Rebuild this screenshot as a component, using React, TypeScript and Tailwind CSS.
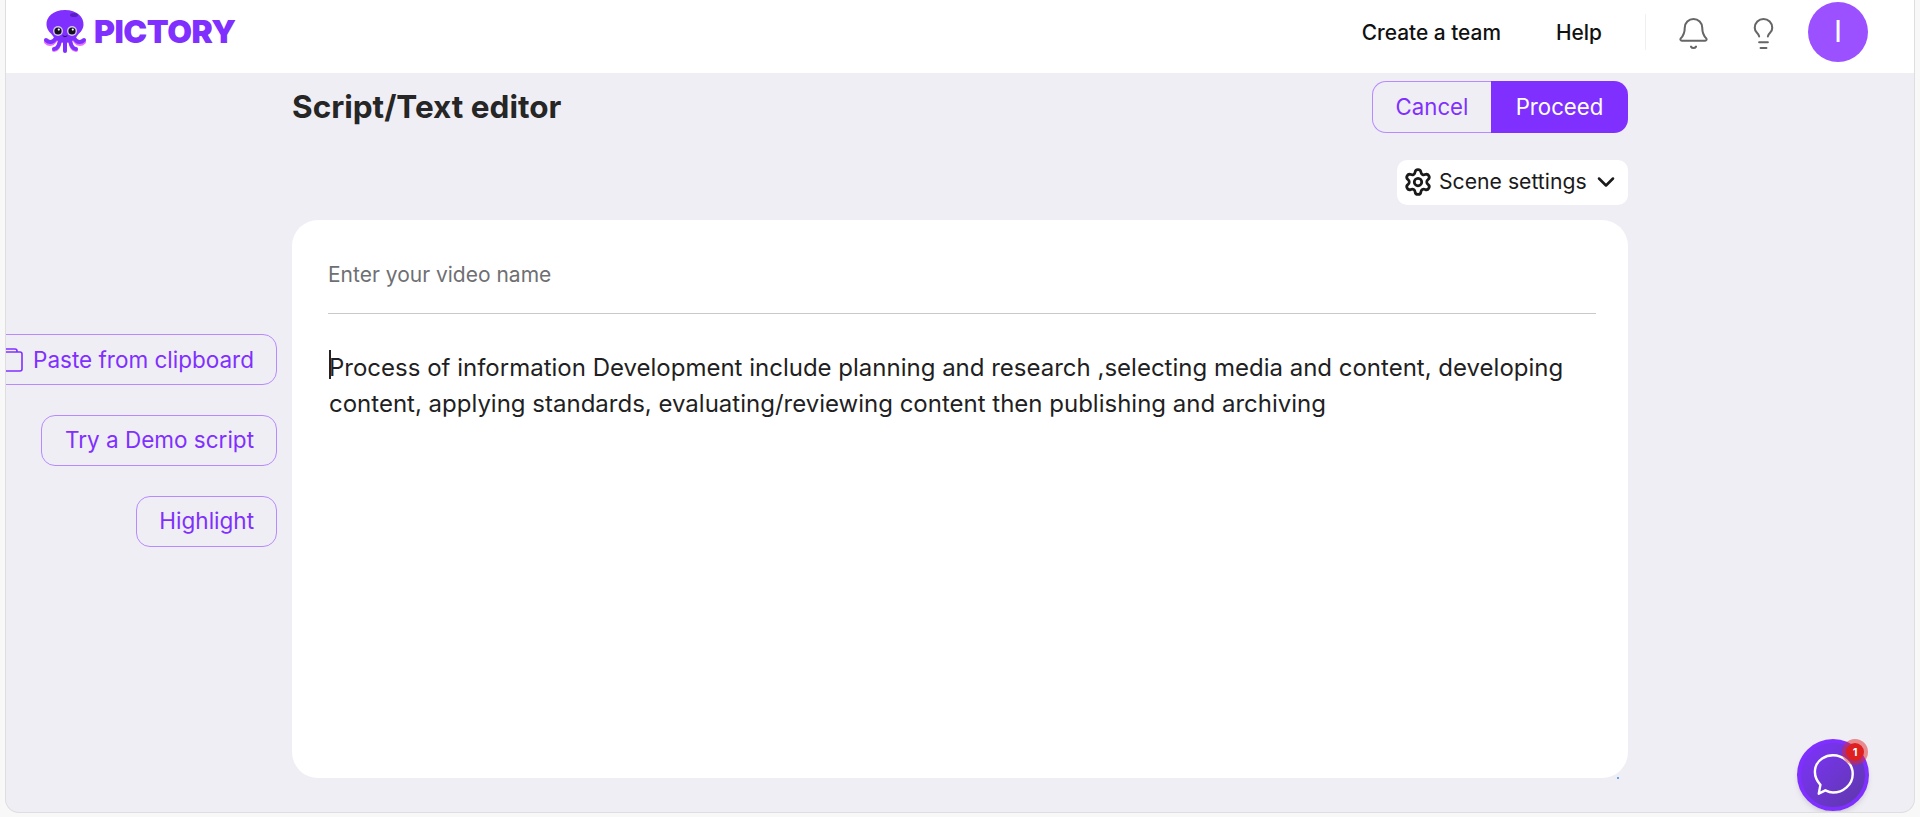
import { Bell, ChevronDown, Lightbulb, Settings } from "lucide-react"

function OctopusLogo() {
  return (
    <svg width="44" height="44" viewBox="0 0 44 44" className="shrink-0">
      <g fill="none" stroke="#e04dff" strokeWidth="4" strokeLinecap="round" opacity="0.8">
        <path d="M13 29 C10 35 6 35 3 32" />
        <path d="M31 29 C34 35 38 35 41 32" />
        <path d="M17 31 C16 37 14 40 11 40" />
        <path d="M27 31 C28 37 30 40 33 40" />
      </g>
      <g fill="none" stroke="#7f30ff" strokeWidth="4" strokeLinecap="round">
        <path d="M13 28 C10 33 6 33 3 30" />
        <path d="M31 28 C34 33 38 33 41 30" />
        <path d="M17 30 C16 36 14 39 11 39" />
        <path d="M27 30 C28 36 30 39 33 39" />
        <path d="M22 31 L22 41" />
      </g>
      <path d="M22 0 C34 0 41 7 40.500 15 C40 21 36 23 34 26 C32 30 27 33 22 33 C17 33 12 30 10 26 C8 23 4 21 3.500 15 C3 7 10 0 22 0 Z" fill="#7f30ff" />
      <ellipse cx="31" cy="5" rx="4" ry="2" fill="#5a1fc0" />
      <circle cx="15" cy="21" r="5" fill="#d5c4f7" />
      <circle cx="29" cy="21" r="5" fill="#d5c4f7" />
      <circle cx="15" cy="21" r="3.600" fill="#15101f" />
      <circle cx="29" cy="21" r="3.600" fill="#15101f" />
      <circle cx="15.800" cy="19.600" r="1.100" fill="#ffffff" />
      <circle cx="29.800" cy="19.600" r="1.100" fill="#ffffff" />
      <path d="M20 26 Q22 27.500 24 26" stroke="#2a1060" strokeWidth="1" fill="none" strokeLinecap="round" />
    </svg>
  )
}

function SideButton({ children, className }: { children: React.ReactNode; className?: string }) {
  return (
    <button className={"flex h-[51px] items-center justify-end rounded-[14px] border border-[#b88aff] pr-[22px] text-[22.500px] text-[#7f30ff] " + (className ?? "")}>
      {children}
    </button>
  )
}

export default function App() {
  return (
    <div className="h-[817px] w-[1920px] overflow-hidden bg-[#f8f8f8] font-['Inter',sans-serif]">
      <div className="relative ml-[5px] h-[813px] w-[1910px] overflow-hidden rounded-b-[14px] border-x border-b border-[#dedede] bg-[#efeef4]">
        <header className="flex h-[73px] items-center bg-white pb-[10px]">
          <div className="ml-[37px] flex items-center gap-[7px]">
            <OctopusLogo />
            <span className="text-[32px] font-black leading-none tracking-[-0.5px] text-[#7f30ff]">PICTORY</span>
          </div>
          <nav className="ml-auto flex items-center pt-[3px] text-[20.900px] font-medium text-[#111111]">
            <a>Create a team</a>
            <a className="ml-[55px]">Help</a>
          </nav>
          <div className="ml-[43px] h-[36px] w-px bg-[#f0f0f0]" />
          <Bell className="ml-[30px] mt-[3px] h-[35px] w-[35px] text-[#666666]" strokeWidth={1.4} />
          <Lightbulb className="ml-[35px] mt-[3px] h-[35px] w-[35px] text-[#666666]" strokeWidth={1.4} />
          <div className="ml-[27px] mr-[46px] flex h-[60px] w-[60px] items-center justify-center rounded-full bg-[#9b51ff] text-[30px] text-white">I</div>
        </header>

        <div className="flex">
          <aside className="w-[286px] shrink-0 overflow-hidden pr-[15px] pt-[261px]">
            <div className="flex flex-col items-end gap-[30px]">
              <SideButton className="-ml-[20px] w-[291px]">
                <svg width="18" height="26" viewBox="0 0 18 26" fill="none" stroke="#7f30ff" strokeWidth="1.6" className="mr-[9px]">
                  <path d="M0 5 H14 A2 2 0 0 1 16 7 V22 A2 2 0 0 1 14 24 H0" />
                  <path d="M0 2 H9 A2 2 0 0 1 11 4 V5" />
                </svg>
                Paste from clipboard
              </SideButton>
              <SideButton className="w-[236px] pb-[1px]">Try a Demo script</SideButton>
              <SideButton className="h-[49px] w-[141px] pb-[1px]">Highlight</SideButton>
            </div>
          </aside>

          <main className="w-[1336px] shrink-0">
            <div className="flex h-[59px] items-start justify-between pt-[8px]">
              <h1 className="pt-[8px] text-[31.500px] font-bold leading-[36px] text-[#262626]">Script/Text editor</h1>
              <div className="flex h-[52px] text-[22.200px]">
                <button className="w-[119px] rounded-l-[14px] border border-r-0 border-[#b88aff] text-[#7f30ff]">Cancel</button>
                <button className="w-[137px] rounded-r-[14px] bg-[#7f30ff] text-white">Proceed</button>
              </div>
            </div>
            <div className="mt-[28px] flex justify-end">
              <button className="flex h-[45px] w-[231px] items-center rounded-[10px] bg-white pb-[2px] pl-[6px] text-[21.200px] text-[#1a1a1a]">
                <Settings className="h-[30px] w-[30px]" strokeWidth={2.2} />
                <span className="ml-[6px]">Scene settings</span>
                <ChevronDown className="ml-[5px] h-[28px] w-[28px]" strokeWidth={2.2} />
              </button>
            </div>
            <section className="relative mt-[15px] h-[558px] rounded-[26px] bg-white pl-[36px] pr-[32px]">
              <div className="flex h-[94px] items-end border-b border-[#c9c9cc] pb-[25px] text-[21px] leading-[26px] text-[#6f6f73]">Enter your video name</div>
              <div className="relative pl-[1px] pt-[36px] text-[24px] leading-[36px] text-[#1f1f24]">
                <span className="absolute left-[1px] top-[36px] h-[29px] w-[2px] bg-[#222222]" />
                Process of information Development include planning and research ,selecting media and content, developing content, applying standards, evaluating/reviewing content then publishing and archiving
              </div>
              <span className="absolute -bottom-px right-[9px] h-[2px] w-[2px] bg-[#6aa0f0]" />
            </section>
          </main>
        </div>

        <button className="absolute bottom-[1px] right-[45px] flex h-[72px] w-[72px] items-center justify-center rounded-full border-[4px] border-[#7f30ff] bg-gradient-to-br from-[#7f30ff] to-[#5d37a8] shadow-md">
          <svg width="46" height="46" viewBox="0 0 42 42" fill="none" stroke="white" strokeWidth="2.200" strokeLinejoin="round">
            <path d="M8 38 L9.500 30 C5 25 3.500 20 5 14 C7 7 14 3 21 3 C30 3 39 10 39 20 C39 30 30 37 21 37 C18 37 16 36 14 35 Z" />
          </svg>
          <span className="absolute -right-[3px] -top-[4px] flex h-[26px] w-[26px] items-center justify-center rounded-full bg-[#e02828]/50">
            <span className="flex h-[18px] w-[18px] items-center justify-center rounded-full bg-[#df2020] text-[11px] font-bold text-white">1</span>
          </span>
        </button>
      </div>
    </div>
  )
}
